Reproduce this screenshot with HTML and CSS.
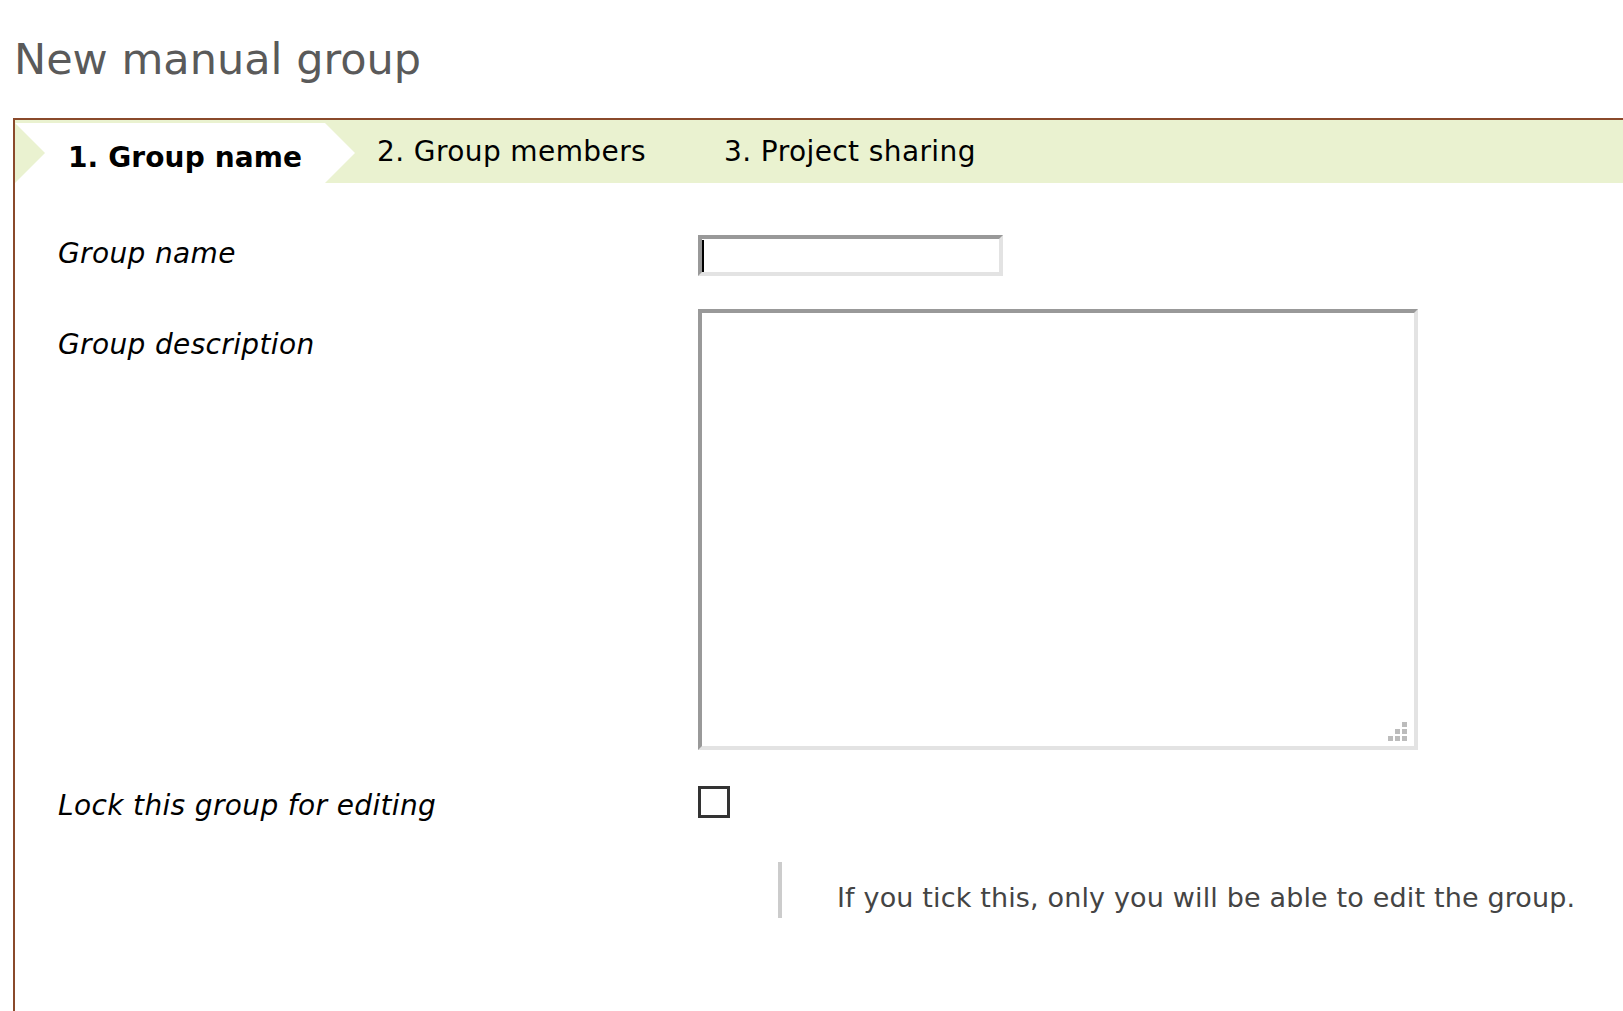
FILE: index.html
```html
<!DOCTYPE html>
<html lang="en">
<head>
<meta charset="utf-8">
<title>New manual group</title>
<link rel="stylesheet" href="styles.css">
</head>
<body>
<h1 class="title">New manual group</h1>
<div class="box">
  <div class="tabs">
    <div class="tab tab-active">1. Group name</div>
    <div class="tab">2. Group members</div>
    <div class="tab">3. Project sharing</div>
  </div>
  <form class="form">
    <div class="row">
      <label class="label label-first" for="gname">Group name</label>
      <div class="field">
        <input class="text-input" id="gname" type="text">
        <span class="caret"></span>
      </div>
    </div>
    <div class="row">
      <label class="label label-desc" for="gdesc">Group description</label>
      <div class="field">
        <textarea class="text-area" id="gdesc"></textarea>
        <svg class="grip" width="19" height="19" viewBox="0 0 19 19">
          <rect x="14" y="0" width="5" height="5"/>
          <rect x="7" y="7" width="5" height="5"/>
          <rect x="14" y="7" width="5" height="5"/>
          <rect x="0" y="14" width="5" height="5"/>
          <rect x="7" y="14" width="5" height="5"/>
          <rect x="14" y="14" width="5" height="5"/>
        </svg>
      </div>
    </div>
    <div class="row">
      <label class="label label-lock" for="glock">Lock this group for editing</label>
      <div class="field">
        <span class="checkbox" id="glock"></span>
      </div>
    </div>
    <div class="help">If you tick this, only you will be able to edit the group.</div>
  </form>
</div>
</body>
</html>
```
FILE: styles.css
```css
html, body {
  margin: 0;
  padding: 0;
  background: #ffffff;
  overflow: hidden;
}
body {
  font-family: "DejaVu Sans", Verdana, sans-serif;
  color: #000;
  padding-left: 13px;
}
.title {
  margin: 0;
  padding: 33px 0 0 1px;
  height: 52px;
  line-height: 52px;
  font-size: 43px;
  font-weight: normal;
  color: #5a5a5a;
  margin-bottom: 33px;
}
.box {
  border-top: 2px solid #8a4a2b;
  border-left: 2px solid #8a4a2b;
  height: calc(100vh - 118px);
  box-sizing: border-box;
}
.tabs {
  display: flex;
  height: 63px;
  background: #eaf2d0;
  font-size: 28px;
  letter-spacing: 0.4px;
}
.tab {
  line-height: 63px;
  padding-left: 22px;
  padding-right: 56px;
  white-space: nowrap;
}
.tab-active {
  margin-top: 3px;
  height: 60px;
  width: 340px;
  box-sizing: border-box;
  padding: 10px 0 0 53px;
  line-height: 50px;
  font-weight: bold;
  letter-spacing: 0.12px;
  background: #ffffff;
  clip-path: polygon(0 0, 310px 0, 340px 30px, 310px 60px, 0 60px, 30px 30px);
}
.form {
  padding: 52px 0 0 43px;
  margin: 0;
}
.row {
  display: flex;
  align-items: flex-start;
}
.label {
  width: 640px;
  flex: none;
  font-size: 28px;
  letter-spacing: 0.36px;
  line-height: 32px;
  font-style: italic;
}
.label-first { padding-top: 3px; }
.label-desc { padding-top: 20px; }
.label-lock { padding-top: 4px; }
.field {
  position: relative;
}
.text-input {
  display: block;
  box-sizing: border-box;
  width: 305px;
  height: 41px;
  margin: 0;
  padding: 0 4px;
  border: 4px solid;
  border-color: #999999 #e3e3e3 #e3e3e3 #999999;
  background: #fff;
  outline: none;
  font: 26px "DejaVu Sans", Verdana, sans-serif;
}
.caret {
  position: absolute;
  left: 4px;
  top: 5px;
  width: 2px;
  height: 32px;
  background: #000;
}
.text-area {
  display: block;
  box-sizing: border-box;
  width: 720px;
  height: 441px;
  margin: 33px 0 0 0;
  padding: 2px;
  border: 4px solid;
  border-color: #999999 #e3e3e3 #e3e3e3 #999999;
  background: #fff;
  resize: none;
  outline: none;
  font: 26px "DejaVu Sans", Verdana, sans-serif;
}
.row:nth-child(2) .label { margin-top: 33px; }
.grip {
  position: absolute;
  right: 11px;
  bottom: 9px;
  fill: #bcbcbc;
}
.row:nth-child(3) { margin-top: 36px; }
.checkbox {
  display: block;
  box-sizing: border-box;
  width: 32px;
  height: 32px;
  border: 3px solid #333333;
  background: #fff;
}
.help {
  margin: 40px 0 0 720px;
  border-left: 4px solid #cccccc;
  padding: 20px 0 4px 55px;
  font-size: 27px;
  letter-spacing: 0.15px;
  line-height: 32px;
  color: #444444;
  white-space: nowrap;
}
```
